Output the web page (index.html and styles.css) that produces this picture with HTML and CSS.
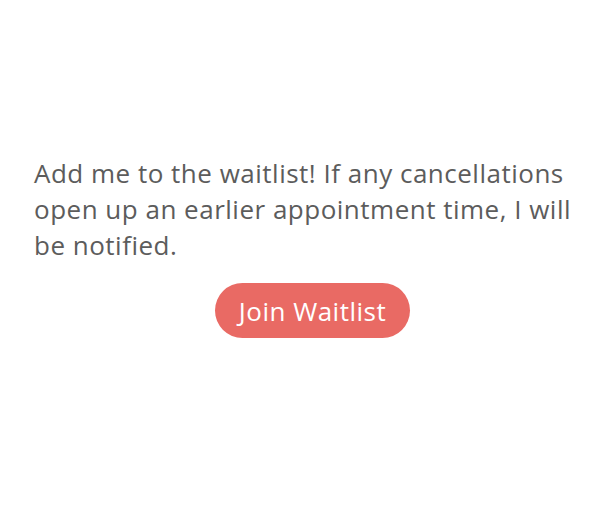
FILE: index.html
```html
<!DOCTYPE html>
<html lang="en">
<head>
    <meta charset="UTF-8">
    <meta name="viewport" content="width=device-width, initial-scale=1.0">
    <title>Waitlist</title>
    <link rel="stylesheet" href="styles.css">
</head>
<body>
    <div class="waitlist">
        <p class="waitlist-text">Add me to the waitlist! If any cancellations open up an earlier appointment time, I will be notified.</p>
        <button class="waitlist-btn">Join Waitlist</button>
    </div>
</body>
</html>
```

FILE: styles.css
```css
body {
    margin: 0;
    background: #fff;
    font-family: "Open Sans", Lato, sans-serif;
}
.waitlist {
    padding: 155px 9px 0 34px;
    display: flex;
    flex-direction: column;
    align-items: center;
}
.waitlist-text {
    margin: 0 0 20px;
    align-self: stretch;
    font-size: 26px;
    line-height: 36px;
    letter-spacing: 0.5px;
    color: #5c5c5c;
    font-weight: 400;
}
.waitlist-btn {
    height: 55px;
    padding: 0 24px;
    border: none;
    border-radius: 28px;
    background: #e96a64;
    color: #fff;
    font-family: inherit;
    font-size: 26px;
    font-weight: 500;
    letter-spacing: 0.5px;
    cursor: pointer;
}
```
